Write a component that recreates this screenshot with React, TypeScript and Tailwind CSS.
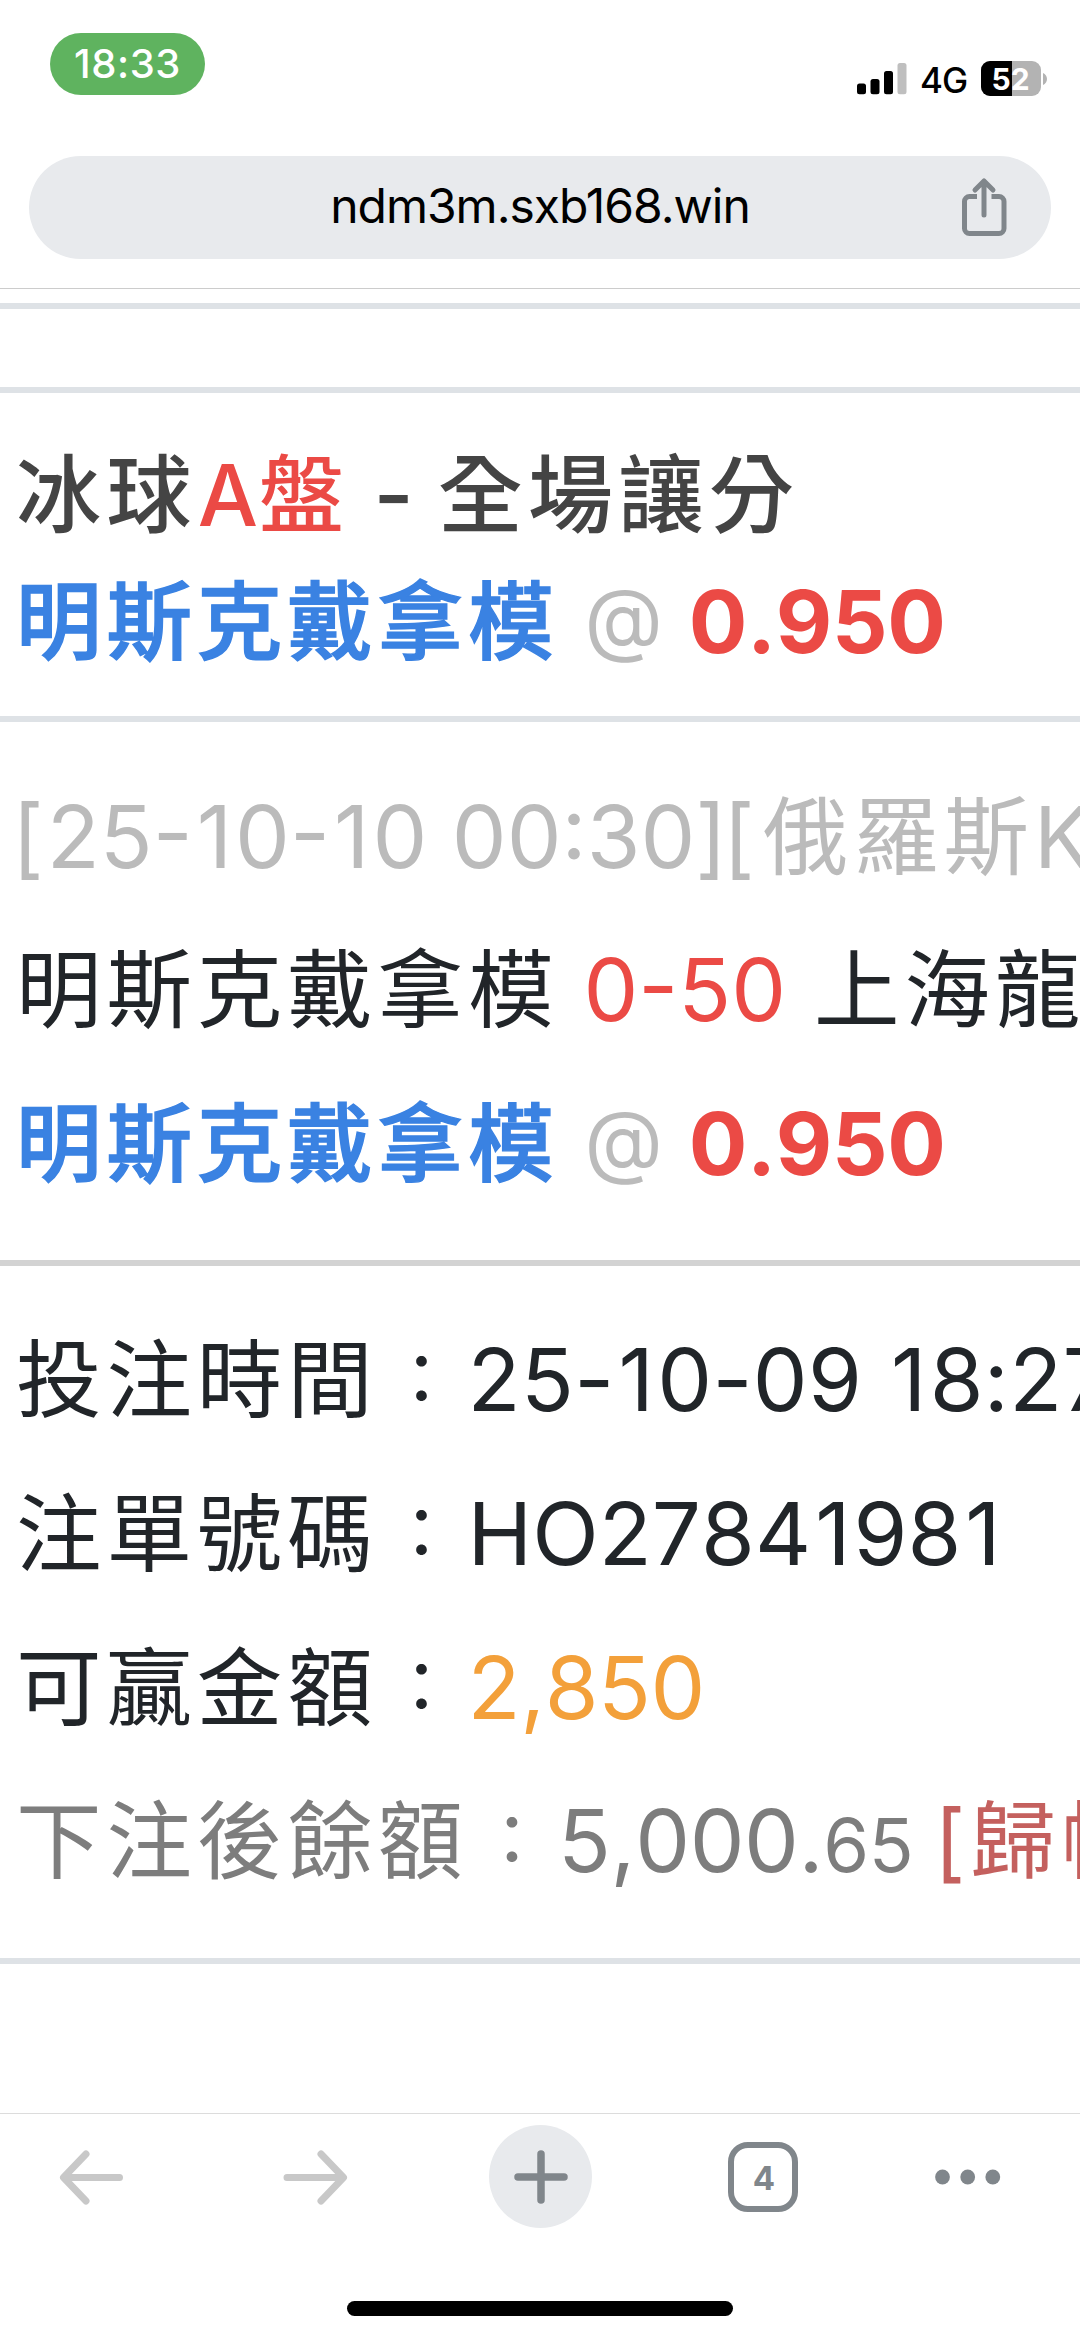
import React from 'react';

function StatusBar() {
  return (
    <div className="flex h-[156px] items-start justify-between pl-[50px] pr-[33px]">
      <div className="mt-[33px] flex h-[62px] w-[155px] items-center justify-center rounded-full bg-[#5fb35f] text-[40px] leading-none font-medium tracking-[0.6px] text-white">
        18:33
      </div>
      <div className="mt-[61px] flex h-[35px] items-center">
        <svg className="h-[35px] w-[50px]" viewBox="0 0 50 35">
          <rect x="0" y="22.5" width="9" height="10.8" rx="2.5" fill="#000" />
          <rect x="13.5" y="18" width="9" height="15.3" rx="2.5" fill="#000" />
          <rect x="27" y="10" width="9" height="23.3" rx="2.5" fill="#000" />
          <rect x="40.5" y="2" width="9" height="31.3" rx="2.5" fill="#bfbfbf" />
        </svg>
        <span className="mt-[3px] ml-[13px] w-[47px] text-[35px] leading-[35px] font-medium tracking-[-1px] text-black">4G</span>
        <div className="relative ml-[14px] flex h-[35px] w-[60px] items-center justify-center overflow-hidden rounded-[9px] bg-[#b3b3b3]">
          <div className="absolute inset-y-0 left-0 w-[31px] bg-black" />
          <span className="relative -ml-px text-[30px] leading-none font-bold text-white">52</span>
        </div>
        <svg className="ml-[2px] h-[12px] w-[4px]" viewBox="0 0 4 12">
          <path d="M0 0c2.500 1 4 3.500 4 6s-1.500 5-4 6z" fill="#b3b3b3" />
        </svg>
      </div>
    </div>
  );
}

function AddressBar() {
  return (
    <div className="relative mx-[29px] flex h-[103px] items-center justify-center rounded-full bg-[#e8eaed]">
      <span className="pb-[4px] text-[48px] leading-none tracking-[-1px] text-black">ndm3m.sxb168.win</span>
      <svg className="absolute top-[21px] right-[43px] h-[60px] w-[48px]" viewBox="0 0 48 60" fill="none" stroke="#80868b" strokeWidth="5">
        <path d="M17 19.500H9.500a5 5 0 0 0-5 5V51.500a5 5 0 0 0 5 5H39a5 5 0 0 0 5-5V24.500a5 5 0 0 0-5-5H31.500" />
        <path d="M24 38V4M15 13L24 4l9 9" strokeLinecap="round" strokeLinejoin="round" />
      </svg>
    </div>
  );
}

// The narrow "1" gets some room on both sides so that digits keep an even rhythm
function Digits({ value }: { value: string }) {
  return (
    <span className="shrink-0">
      {value.split('').map((char, i) =>
        char === '1' ? (
          <span key={i} className="pr-[3px] pl-[4px]">1</span>
        ) : (
          char
        )
      )}
    </span>
  );
}

interface PickProps {
  team: string;
  odds: string;
}

function Pick({ team, odds }: PickProps) {
  return (
    <>
      <span className="text-[85.5px] font-medium tracking-[4.9px] text-[#3a82e2] [-webkit-text-stroke:1.4px_#3a82e2]">{team}</span>
      <span className="relative -top-[6px] ml-[26px] text-[81px] text-[#bbbbbb]">@</span>
      <span className="ml-[26px] font-bold tracking-[-0.3px] text-[#eb4a45]">{odds}</span>
    </>
  );
}

interface InfoRowProps {
  label: string;
  className: string;
  children: React.ReactNode;
}

function InfoRow({ label, className, children }: InfoRowProps) {
  return (
    <div className={`flex h-[153.8px] items-baseline leading-[153.8px] ${className}`}>
      <span className="shrink-0 text-[85.5px] tracking-[4.9px]">{label}</span>
      <span className="relative -top-[6px] w-[90px] shrink-0 pl-[9px] text-[70px]">：</span>
      {children}
    </div>
  );
}

function BetSlip() {
  return (
    <div className="h-[1824px] overflow-hidden text-[87px] whitespace-pre text-[#212529] [font-kerning:none]">
      <div className="mt-[14px] h-[90px] border-y-[6.5px] border-[#dee2e6]" />

      <div className="h-[329px] border-b-[6.5px] border-[#dee2e6] pt-[38px] pl-[16px]">
        <div className="flex h-[127px] items-baseline leading-[127px] font-medium text-[#444444]">
          <span className="text-[85px] tracking-[5.4px]">冰球</span>
          <span className="ml-px text-[85px] text-[#eb4a45]">A</span>
          <span className="ml-px text-[85px] tracking-[5.4px] text-[#eb4a45]">盤</span>
          <span className="ml-[24px]">-</span>
          <span className="ml-[24px] text-[85px] tracking-[5.4px]">全場讓分</span>
        </div>
        <div className="flex h-[127px] items-baseline leading-[127px]">
          <Pick team="明斯克戴拿模" odds="0.950" />
        </div>
      </div>

      <div className="h-[544px] border-b-[6.5px] border-[#d3d3d3] pt-[38px] pl-[16px]">
        <div className="flex h-[153.4px] items-baseline leading-[153.4px] text-[#bbbbbb]">
          <span className="-ml-[4px] shrink-0">[</span>
          <span className="w-[3px] shrink-0" />
          <Digits value="25-10-10 00:30" />
          <span className="shrink-0 tracking-[-4px]">][</span>
          <span className="ml-[12px] shrink-0 text-[85.5px] tracking-[4.9px]">俄羅斯K</span>
        </div>
        <div className="flex h-[153.4px] items-baseline leading-[153.4px]">
          <span className="shrink-0 text-[85.5px] tracking-[4.9px]">明斯克戴拿模</span>
          <span className="ml-[25px] shrink-0 text-[#eb4a45]">0-50</span>
          <span className="ml-[28px] shrink-0 text-[85.5px] tracking-[4.9px]">上海龍</span>
        </div>
        <div className="flex h-[153.4px] items-baseline leading-[153.4px]">
          <Pick team="明斯克戴拿模" odds="0.950" />
        </div>
      </div>

      <div className="h-[698px] border-b-[6.5px] border-[#dee2e6] pt-[37px] pl-[16px]">
        <InfoRow label="投注時間" className="tracking-[0.3px] text-[#212529]">
          <Digits value="25-10-09 18:27" />
        </InfoRow>
        <InfoRow label="注單號碼" className="text-[#212529]">
          <Digits value="HO27841981" />
        </InfoRow>
        <InfoRow label="可贏金額" className="text-[#212529]">
          <span className="tracking-[-0.5px] text-[#f3a03a]">2,850</span>
        </InfoRow>
        <InfoRow label="下注後餘額" className="text-[#7d7d7d]">
          <span className="shrink-0 tracking-[-0.4px]">5,000.</span>
          <span className="shrink-0 text-[74px] tracking-[-0.5px]">65</span>
          <span className="ml-[21px] shrink-0 text-[85.5px] tracking-[4.9px] text-[#c4605e]">[歸帳</span>
        </InfoRow>
      </div>
    </div>
  );
}

function BottomBar() {
  return (
    <div className="h-[225px] border-t border-[#dcdcdc]">
      <div className="flex items-center pt-[11px] pl-[56px]">
        <svg className="h-[64px] w-[70px]" viewBox="0 0 70 64" fill="none" stroke="#c8c8c8" strokeWidth="7" strokeLinecap="round" strokeLinejoin="round">
          <path d="M63.500 32.500H8M30 9L7.500 32.500L30 56" />
        </svg>
        <svg className="ml-[153px] h-[64px] w-[70px]" viewBox="0 0 70 64" fill="none" stroke="#c8c8c8" strokeWidth="7" strokeLinecap="round" strokeLinejoin="round">
          <path d="M8 32.500H63M42 9L64.500 32.500L42 56" />
        </svg>
        <div className="ml-[140px] flex h-[103px] w-[103px] items-center justify-center rounded-full bg-[#e8eaed]">
          <svg className="h-[54px] w-[54px]" viewBox="0 0 54 54" fill="none" stroke="#80868b" strokeWidth="7.500" strokeLinecap="round">
            <path d="M27 4v46M4 27h46" />
          </svg>
        </div>
        <div className="ml-[136px] flex h-[70px] w-[70px] items-center justify-center rounded-[20px] border-[6px] border-[#80868b] pt-[3px] pl-[2px] text-[33px] leading-none font-bold text-[#80868b]">
          4
        </div>
        <svg className="ml-[137px] h-[16px] w-[66px]" viewBox="0 0 66 16" fill="#80868b">
          <circle cx="7.500" cy="8" r="7.400" />
          <circle cx="32.700" cy="8" r="7.400" />
          <circle cx="57.800" cy="8" r="7.400" />
        </svg>
      </div>
      <div className="mx-auto mt-[73px] h-[15px] w-[386px] rounded-full bg-black" />
    </div>
  );
}

export default function App() {
  return (
    <div className="h-[2339px] w-[1080px] overflow-hidden bg-white font-['Inter','Noto_Sans_CJK_TC',sans-serif]" lang="zh-Hant">
      <div className="h-[289px] border-b border-[#cccccc]">
        <StatusBar />
        <AddressBar />
      </div>
      <BetSlip />
      <BottomBar />
    </div>
  );
}
